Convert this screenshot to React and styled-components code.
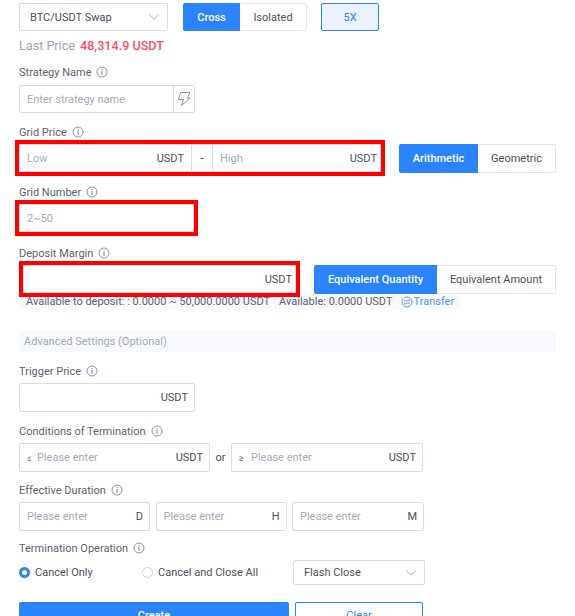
import React from 'react';
import styled, {createGlobalStyle, css} from 'styled-components';
import {ChevronDown} from 'lucide-react';

const GlobalStyle = createGlobalStyle`
    html, body {
        margin: 0;
        padding: 0;
        background: #fff;
        overflow: hidden;
    }
    body {
        font-family: Roboto, "Liberation Sans", sans-serif;
        font-size: 11px;
        color: #4c4f5c;
    }
`;

function InfoIcon() {
    return (
        <InfoSvg viewBox="0 0 12 12">
            <circle cx="6" cy="6" r="5" fill="none" stroke="#8a93a6" strokeWidth="1" />
            <rect x="5.4" y="5" width="1.2" height="3.8" fill="#8a93a6" />
            <rect x="5.4" y="3" width="1.2" height="1.2" fill="#8a93a6" />
        </InfoSvg>
    );
}

function BoltIcon() {
    return (
        <svg width="13" height="14" viewBox="0 0 13 14">
            <path d="M2.5 0.5h9.5L9.5 6h2.5L3.5 13.5 5.5 7.5H0.5z" fill="none" stroke="#8a93a6" strokeWidth="1" />
        </svg>
    );
}

function TransferIcon() {
    return (
        <svg width="12" height="12" viewBox="0 0 12 12">
            <circle cx="6" cy="6" r="5" fill="none" stroke="#6d9cf6" strokeWidth="1" />
            <path d="M3 4.8h6M7.4 3.2 9 4.8M9 7.2H3M4.6 8.8 3 7.2" fill="none" stroke="#6d9cf6" strokeWidth="0.9" />
        </svg>
    );
}

function Label({children}) {
    return (
        <LabelRow>
            {children}
            <InfoIcon />
        </LabelRow>
    );
}

function App() {
    return (
        <>
            <GlobalStyle />
            <Page>
                <Row>
                    <SelectBox $width="149px">
                        BTC/USDT Swap
                        <ChevronDown size={18} strokeWidth={1} color="#8a93a6" />
                    </SelectBox>
                    <Toggle $height="28px">
                        <ToggleItem $active $width="57px">Cross</ToggleItem>
                        <ToggleItem $width="67px">Isolated</ToggleItem>
                    </Toggle>
                    <LeverageButton>5X</LeverageButton>
                </Row>

                <PriceLine>
                    Last Price <PriceValue>48,314.9 USDT</PriceValue>
                </PriceLine>

                <Field>
                    <Label>Strategy Name</Label>
                    <InputBox $width="176px" $height="28px" $nudge $flush>
                        <Placeholder>Enter strategy name</Placeholder>
                        <BoltCell><BoltIcon /></BoltCell>
                    </InputBox>
                </Field>

                <Field>
                    <Label>Grid Price</Label>
                    <Row $gap="18px">
                        <InputBox $width="362px" $marked $flush>
                            <RangeSide $width="171px">
                                <Placeholder>Low</Placeholder>
                                <Unit>USDT</Unit>
                            </RangeSide>
                            <RangeDash>-</RangeDash>
                            <RangeSide $width="167px" $last>
                                <Placeholder>High</Placeholder>
                                <Unit>USDT</Unit>
                            </RangeSide>
                        </InputBox>
                        <Toggle>
                            <ToggleItem $active $width="79px">Arithmetic</ToggleItem>
                            <ToggleItem $width="78px">Geometric</ToggleItem>
                        </Toggle>
                    </Row>
                </Field>

                <Field>
                    <Label>Grid Number</Label>
                    <InputBox $width="175px" $marked>
                        <Placeholder>2~50</Placeholder>
                    </InputBox>
                </Field>

                <Field $space="13px">
                    <Label>Deposit Margin</Label>
                    <Row $gap="18px">
                        <DepositBox $width="273px" $marked>
                            <span />
                            <Unit>USDT</Unit>
                        </DepositBox>
                        <Toggle>
                            <ToggleItem $active $width="123px">Equivalent Quantity</ToggleItem>
                            <ToggleItem $width="119px">Equivalent Amount</ToggleItem>
                        </Toggle>
                    </Row>
                    <AvailableBar>
                        <span>Available to deposit: : 0.0000 ~ 50,000.0000 USDT</span>
                        <span>Available: 0.0000 USDT</span>
                        <TransferLink><TransferIcon />Transfer</TransferLink>
                    </AvailableBar>
                </Field>

                <AdvancedBar>Advanced Settings (Optional)</AdvancedBar>

                <Field>
                    <Label>Trigger Price</Label>
                    <InputBox $width="176px">
                        <span />
                        <Unit>USDT</Unit>
                    </InputBox>
                </Field>

                <Field>
                    <Label>Conditions of Termination</Label>
                    <Row $gap="0">
                        <InputBox $width="191px">
                            <Placeholder><Sign>≤</Sign>Please enter</Placeholder>
                            <Unit>USDT</Unit>
                        </InputBox>
                        <OrText>or</OrText>
                        <InputBox $width="192px">
                            <Placeholder><Sign $wide>≥</Sign>Please enter</Placeholder>
                            <Unit>USDT</Unit>
                        </InputBox>
                    </Row>
                </Field>

                <Field $space="10px">
                    <Label>Effective Duration</Label>
                    <Row $gap="5.5px">
                        <InputBox $width="131px">
                            <Placeholder>Please enter</Placeholder>
                            <Unit>D</Unit>
                        </InputBox>
                        <InputBox $width="131px">
                            <Placeholder>Please enter</Placeholder>
                            <Unit>H</Unit>
                        </InputBox>
                        <InputBox $width="132px">
                            <Placeholder>Please enter</Placeholder>
                            <Unit>M</Unit>
                        </InputBox>
                    </Row>
                </Field>

                <Field $space="9px">
                    <Label>Termination Operation</Label>
                    <RadioRow>
                        <RadioOption $width="123px"><RadioDot $checked />Cancel Only</RadioOption>
                        <RadioOption $width="151px"><RadioDot />Cancel and Close All</RadioOption>
                        <SelectBox $width="132px" $short>
                            Flash Close
                            <ChevronDown size={18} strokeWidth={1} color="#8a93a6" />
                        </SelectBox>
                    </RadioRow>
                </Field>

                <ActionRow>
                    <CreateButton>Create</CreateButton>
                    <ClearButton>Clear</ClearButton>
                </ActionRow>
            </Page>
        </>
    );
}

const Page = styled.div`
    width: 537px;
    height: 613px;
    padding: 3px 0 0 19px;
    overflow: hidden;
`;

const Row = styled.div`
    display: flex;
    align-items: flex-start;
    gap: ${props => props.$gap || '15px'};
`;

const SelectBox = styled.div`
    display: flex;
    align-items: center;
    justify-content: space-between;
    box-sizing: border-box;
    width: ${props => props.$width};
    height: ${props => (props.$short ? '25px' : '28px')};
    padding: 0 4px 0 10px;
    border: 1px solid #d9dce5;
    border-radius: 2px;
    color: #4c4f5c;
    background: #fff;
`;

const Toggle = styled.div`
    display: flex;
    height: ${props => props.$height || '29px'};
`;

const ToggleItem = styled.div`
    display: flex;
    align-items: center;
    justify-content: center;
    box-sizing: border-box;
    width: ${props => props.$width};
    border: 1px solid #e1e4eb;
    border-left: none;
    border-radius: 0 2px 2px 0;
    color: #4c4f5c;
    ${props => props.$active && css`
        border: none;
        border-radius: 2px 0 0 2px;
        background: #2a84fd;
        color: #fff;
        font-weight: 500;
    `}
`;

const LeverageButton = styled.div`
    display: flex;
    align-items: center;
    justify-content: center;
    box-sizing: border-box;
    width: 58px;
    height: 28px;
    margin-left: -1px;
    border: 1px solid #2a84fd;
    border-radius: 2px;
    background: #e9f2fe;
    color: #2a84fd;
`;

const PriceLine = styled.div`
    margin-top: 8px;
    height: 14px;
    line-height: 14px;
    font-size: 12.6px;
    color: #9ba3b5;
`;

const PriceValue = styled.span`
    margin-left: 2px;
    color: #ff4d5e;
    font-weight: 500;
`;

const Field = styled.div`
    margin-top: ${props => props.$space || '11px'};
`;

const LabelRow = styled.div`
    display: flex;
    align-items: center;
    gap: 5px;
    height: 16px;
    margin-bottom: 4px;
    color: #5d6270;
`;

const InfoSvg = styled.svg`
    width: 12px;
    height: 12px;
`;

const InputBox = styled.div`
    display: flex;
    align-items: center;
    justify-content: space-between;
    box-sizing: border-box;
    width: ${props => props.$width};
    height: ${props => props.$height || '29px'};
    padding: ${props => (props.$flush ? '0 0 0 7px' : '0 6px 0 7px')};
    border: 1px solid #d9dce5;
    border-radius: 2px;
    background: #fff;
    ${props => props.$nudge && css`
        margin-top: 5px;
    `}
    ${props => props.$marked && css`
        height: 28px;
        border-radius: 0;
        outline: 4px solid #f00;
    `}
`;

const DepositBox = styled(InputBox)`
    margin-left: 4px;
    padding-right: 3px;
`;

const Placeholder = styled.span`
    color: #a4abb9;
`;

const Unit = styled.span`
    color: #4c4f5c;
`;

const Sign = styled.span`
    display: inline-block;
    width: ${props => (props.$wide ? '12px' : '10px')};
    font-size: 9px;
    color: #6a7080;
`;

const BoltCell = styled.div`
    display: flex;
    align-items: center;
    justify-content: center;
    width: 20px;
    height: 100%;
    border-left: 1px solid #d9dce5;
`;

const RangeSide = styled.div`
    display: flex;
    align-items: center;
    justify-content: space-between;
    box-sizing: border-box;
    width: ${props => props.$width};
    margin-left: ${props => (props.$last ? '0' : '-7px')};
    padding: ${props => (props.$last ? '0 3px 0 7px' : '0 7px')};
`;

const RangeDash = styled.div`
    display: flex;
    align-items: center;
    justify-content: center;
    width: 22px;
    height: 100%;
    border-left: 1px solid #d9dce5;
    border-right: 1px solid #d9dce5;
    box-sizing: border-box;
    font-size: 12px;
`;

const AvailableBar = styled.div`
    display: flex;
    align-items: center;
    gap: 9px;
    width: 441px;
    height: 15px;
    padding-left: 7px;
    box-sizing: border-box;
    background: #f7f9fd;
    color: #5d6270;
    white-space: nowrap;
`;

const TransferLink = styled.span`
    display: inline-flex;
    align-items: center;
    color: #5b93f5;
`;

const AdvancedBar = styled.div`
    display: flex;
    align-items: center;
    height: 21px;
    margin-top: 22px;
    padding-left: 5px;
    background: #f7f9fd;
    color: #a4abb9;
`;

const OrText = styled.span`
    align-self: center;
    width: 21px;
    text-align: center;
    color: #4c4f5c;
`;

const RadioRow = styled.div`
    display: flex;
    align-items: center;
    height: 25px;
`;

const RadioOption = styled.div`
    display: flex;
    align-items: center;
    gap: 5px;
    width: ${props => props.$width};
    color: #4c4f5c;
`;

const RadioDot = styled.span`
    box-sizing: border-box;
    width: 11px;
    height: 11px;
    border-radius: 50%;
    border: 1px solid #c9cdd8;
    ${props => props.$checked && css`
        border: 3px solid #2a84fd;
    `}
`;

const ActionRow = styled.div`
    display: flex;
    gap: 6px;
    margin-top: 17px;
`;

const CreateButton = styled.div`
    display: flex;
    align-items: center;
    justify-content: center;
    width: 270px;
    height: 26px;
    border-radius: 2px;
    background: #2a84fd;
    color: #fff;
    font-weight: 500;
`;

const ClearButton = styled.div`
    display: flex;
    align-items: center;
    justify-content: center;
    box-sizing: border-box;
    width: 128px;
    height: 26px;
    border: 1px solid #2a84fd;
    border-radius: 2px;
    color: #2a84fd;
`;

export default App;
